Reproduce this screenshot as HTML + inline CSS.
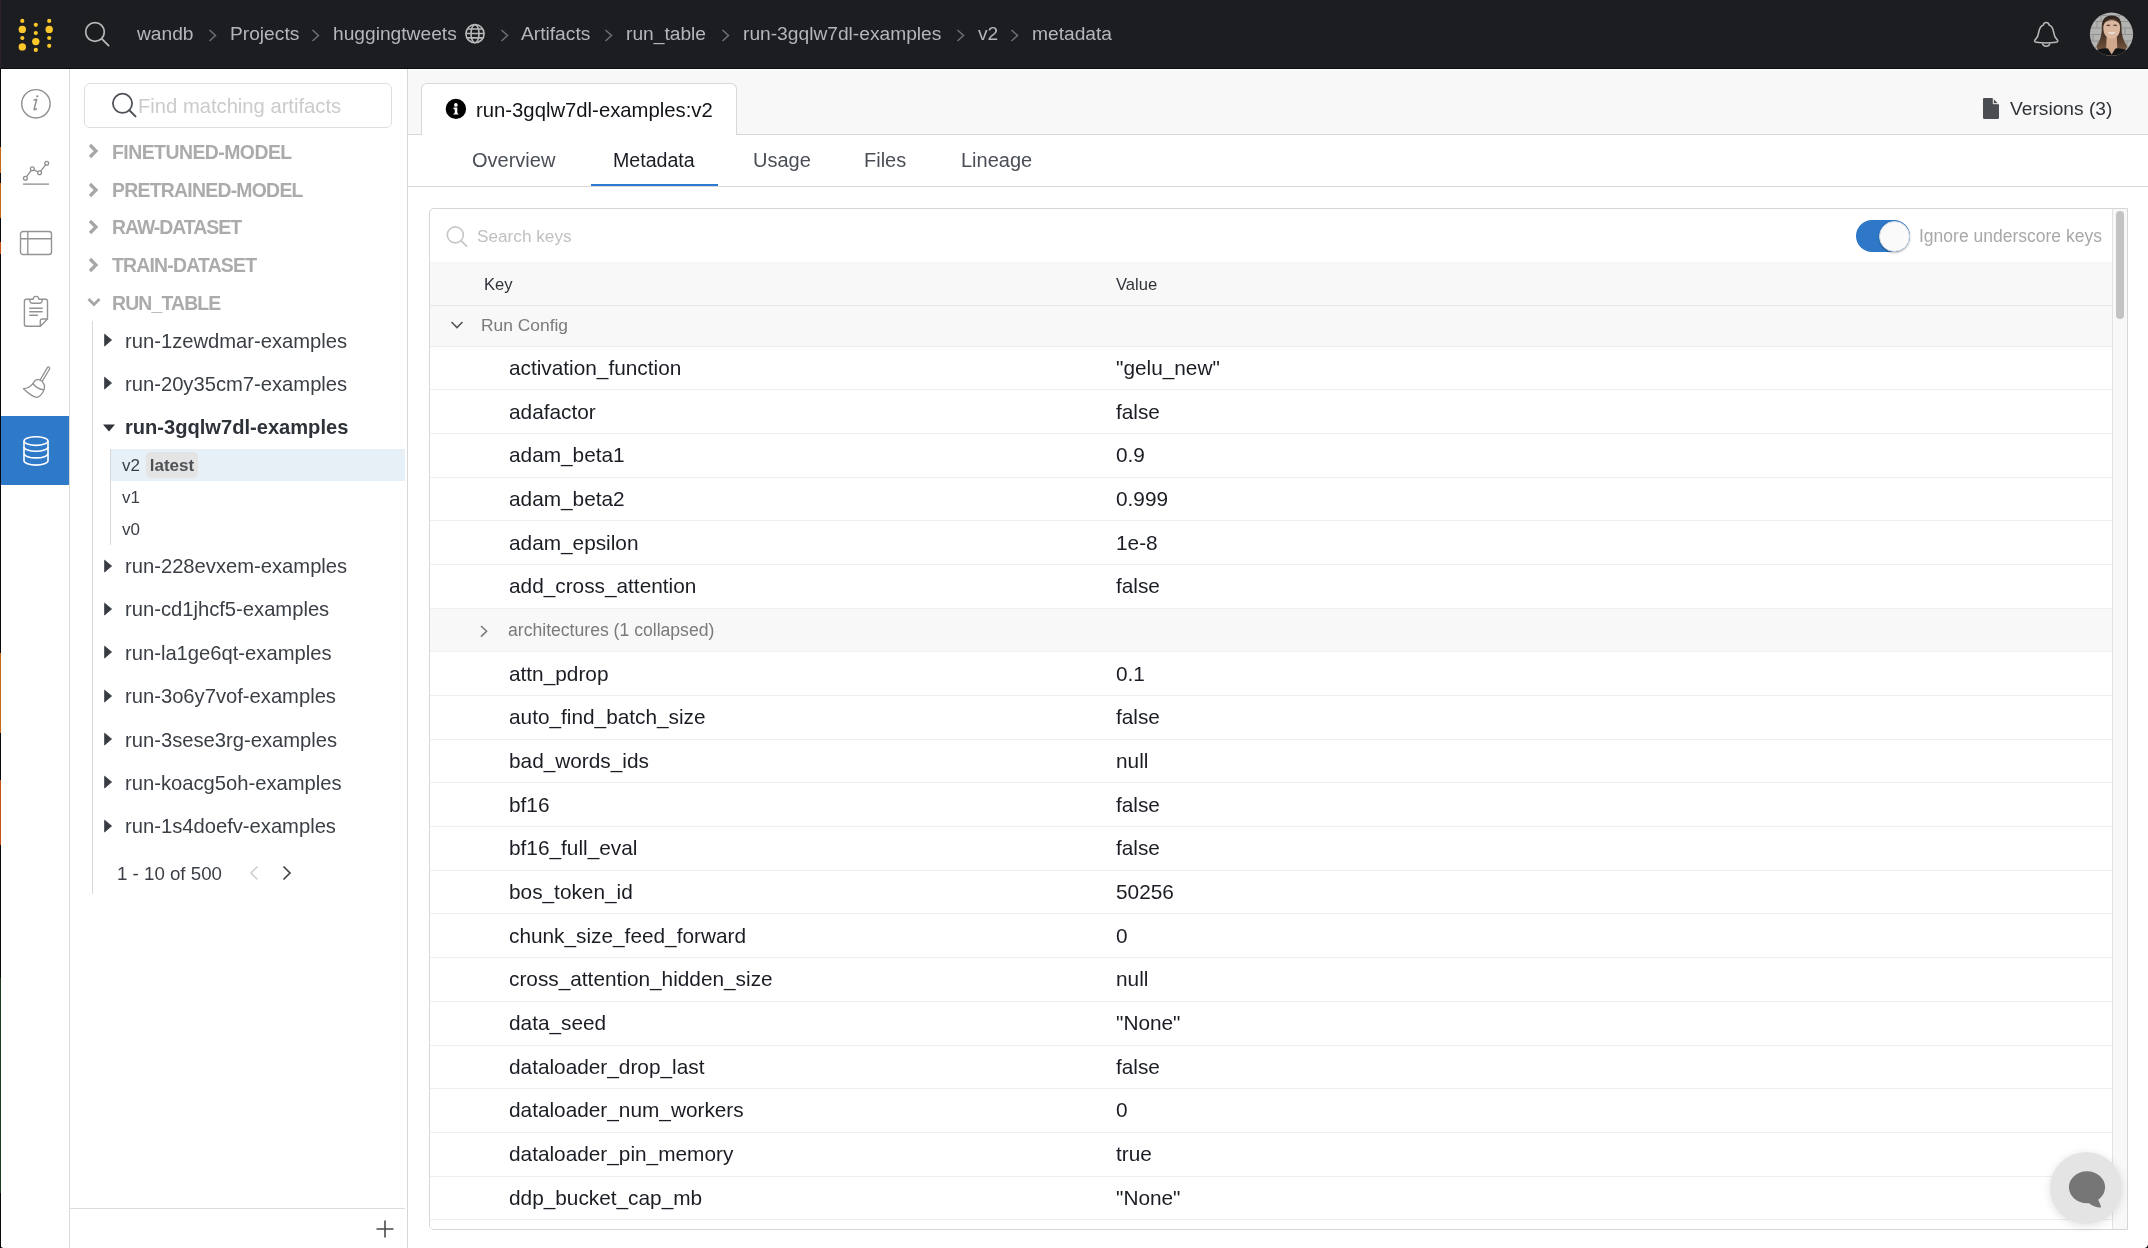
<!DOCTYPE html>
<html><head><meta charset="utf-8"><title>run-3gqlw7dl-examples metadata</title>
<style>
*{box-sizing:border-box}
html,body{margin:0;padding:0}
body{width:2148px;height:1248px;overflow:hidden;position:relative;background:#fff;font-family:"Liberation Sans",sans-serif;color:#1a1d24}
.abs{position:absolute}
.k,.v,.bc,.run,.cat,.ver,.badge,.tabs,.arch,span,.abs{will-change:transform}
#hdr{position:absolute;left:0;top:0;width:2148px;height:69px;background:#1c1d21;border-bottom:1px solid #0d0e11}
.bc{position:absolute;top:22px;font-size:19.2px;color:#b4b6ba;white-space:nowrap;line-height:24px}
.bchev{position:absolute;top:28.5px}
#rail{position:absolute;left:0;top:69px;width:70px;height:1179px;background:#fff;border-right:1px solid #d9d9d9}
#side{position:absolute;left:70px;top:69px;width:338px;height:1179px;background:#fff;border-right:1px solid #d6d6d6}
.cat{position:absolute;left:112px;margin-top:-1px;font-size:19.4px;font-weight:700;color:#ababab;letter-spacing:-0.45px;white-space:nowrap;line-height:22px}
.cchev{position:absolute;left:87px;margin-top:-1px}
.run{position:absolute;left:125px;font-size:20.2px;color:#3a3e45;white-space:nowrap;line-height:23px}
.run.b{font-weight:700;color:#2d3138;font-size:20.1px;left:125px}
.tri{position:absolute;left:103px}
.ver{position:absolute;left:122px;font-size:17px;color:#3a3e45;line-height:22px}
.badge{position:absolute;left:146px;top:452px;width:52px;height:26px;border-radius:5px;background:#e4e4e4;color:#4e5156;font-size:17px;font-weight:700;line-height:28px;text-align:center;letter-spacing:0px}
.vhl{position:absolute;left:111px;top:449px;width:294px;height:31.5px;background:#e8f0f7}
.vline{position:absolute;left:110px;top:449px;width:1px;height:96px;background:#d8d8d8}
#main{position:absolute;left:408px;top:68px;width:1740px;height:1180px;background:#fff}
#topgray{position:absolute;left:408px;top:70px;width:1740px;height:65px;background:#f8f8f8;border-bottom:1px solid #d8d8d8}
#tab{position:absolute;left:421px;top:83px;width:316px;height:52px;background:#fff;border:1px solid #d8d8d8;border-bottom:none;border-radius:6px 6px 0 0}
.tabs{position:absolute;top:148px;font-size:20px;color:#4a4f57;line-height:24px;white-space:nowrap}
#tabline{position:absolute;left:408px;top:186px;width:1740px;height:1px;background:#d8d8d8}
#uline{position:absolute;left:591px;top:184px;width:127px;height:2px;background:#2e7ad2}
#tbl{position:absolute;left:429px;top:208px;width:1699px;height:1022px;border:1px solid #d6d6d6;border-radius:5px 0 0 5px;overflow:hidden;background:#fff}
.thead{position:absolute;left:0;top:53px;width:1682px;height:44px;background:#f8f8f8;border-bottom:1px solid #e6e6e6}
.trow{position:absolute;left:0;width:1682px;height:43.67px;border-bottom:1px solid #efefef;background:#fff}
.trow.grp{background:#f8f8f8}
.k{position:absolute;left:79px;top:-0.8px;line-height:43px;font-size:20.8px;color:#1a1d24;white-space:nowrap}
.v{position:absolute;left:686px;top:-0.8px;line-height:43px;font-size:20.8px;color:#1a1d24;white-space:nowrap}
.arch{position:absolute;left:78px;top:0.5px;line-height:43px;font-size:17.6px;color:#7a7a7a;white-space:nowrap}
.rchev{position:absolute;left:48.5px;top:16.5px}
#sbar{position:absolute;left:1682px;top:0;width:16px;height:1022px;background:#f8f8f8;border-left:1px solid #e2e2e2}
#thumb{position:absolute;left:1686px;top:2px;width:8px;height:107.5px;border-radius:5px;background:#c3c3c3}
</style></head><body>
<div class="abs" style="left:0;top:0;width:1px;height:1248px;background:#0a0a0c;z-index:50"></div><div class="abs" style="left:0;top:0;width:1px;height:1248px;z-index:51;background:linear-gradient(#2a2228 0 68px,transparent 68px 147px,#c8681a 147px 173px,transparent 173px 183px,#c8681a 183px 218px,transparent 218px 242px,#c8501a 242px 254px,transparent 254px 653px,#c8681a 653px 733px,transparent 733px 780px,#c8501a 780px 845px,transparent 845px 978px,#1e3a1e 978px 1193px,transparent 1193px)"></div><div class="abs" style="left:0;top:1244px;width:4px;height:4px;z-index:52;background:radial-gradient(circle at 100% 0,transparent 3.5px,#000 4.5px)"></div><div class="abs" style="left:2144px;top:1244px;width:4px;height:4px;z-index:52;background:radial-gradient(circle at 0 0,transparent 3.5px,#000 4.5px)"></div>
<div id="hdr">
 <svg class="abs" style="left:14px;top:14px" width="44" height="42" viewBox="14 14 44 42">
  <g fill="#fcc72b">
   <circle cx="22.3" cy="20.9" r="2.1"/><circle cx="22.3" cy="29.4" r="3.7"/><circle cx="22.3" cy="38.0" r="2.1"/><circle cx="22.3" cy="46.9" r="3.7"/>
   <circle cx="35.8" cy="24.8" r="2.1"/><circle cx="35.8" cy="33.0" r="2.1"/><circle cx="35.8" cy="41.6" r="3.7"/><circle cx="35.8" cy="49.9" r="2.1"/>
   <circle cx="49.2" cy="20.9" r="2.1"/><circle cx="49.2" cy="29.4" r="3.7"/><circle cx="49.2" cy="38.0" r="2.1"/><circle cx="49.2" cy="45.8" r="2.1"/>
  </g>
 </svg>
 <svg class="abs" style="left:80px;top:18px" width="32" height="32" viewBox="80 18 32 32"><circle cx="95" cy="32" r="9.3" fill="none" stroke="#b8b8b8" stroke-width="1.7"/><path d="M101.8 38.8 L108.6 45.6" stroke="#b8b8b8" stroke-width="1.8" stroke-linecap="round"/></svg>
 <div class="bc" style="left:137px">wandb</div>
 <div class="bc" style="left:230px">Projects</div>
 <div class="bc" style="left:333px">huggingtweets</div>
 <svg class="abs" style="left:464px;top:23px" width="22" height="22" viewBox="0 0 22 22"><g fill="none" stroke="#b8b9bb" stroke-width="1.6"><circle cx="11" cy="10.7" r="9.1"/><ellipse cx="11" cy="10.7" rx="4" ry="9.1"/><path d="M3.2 6H18.8M1.9 10.5H20.1M3.2 14.9H18.8"/></g></svg>
 <div class="bc" style="left:521px">Artifacts</div>
 <div class="bc" style="left:626px">run_table</div>
 <div class="bc" style="left:743px">run-3gqlw7dl-examples</div>
 <div class="bc" style="left:978px">v2</div>
 <div class="bc" style="left:1032px">metadata</div>
 <svg class="bchev" style="left:208px" width="9" height="13" viewBox="0 0 9 13"><path d="M1.5 1 L7.5 6.5 L1.5 12" fill="none" stroke="#6d7075" stroke-width="1.5"/></svg><svg class="bchev" style="left:311px" width="9" height="13" viewBox="0 0 9 13"><path d="M1.5 1 L7.5 6.5 L1.5 12" fill="none" stroke="#6d7075" stroke-width="1.5"/></svg><svg class="bchev" style="left:500px" width="9" height="13" viewBox="0 0 9 13"><path d="M1.5 1 L7.5 6.5 L1.5 12" fill="none" stroke="#6d7075" stroke-width="1.5"/></svg><svg class="bchev" style="left:604px" width="9" height="13" viewBox="0 0 9 13"><path d="M1.5 1 L7.5 6.5 L1.5 12" fill="none" stroke="#6d7075" stroke-width="1.5"/></svg><svg class="bchev" style="left:721px" width="9" height="13" viewBox="0 0 9 13"><path d="M1.5 1 L7.5 6.5 L1.5 12" fill="none" stroke="#6d7075" stroke-width="1.5"/></svg><svg class="bchev" style="left:956px" width="9" height="13" viewBox="0 0 9 13"><path d="M1.5 1 L7.5 6.5 L1.5 12" fill="none" stroke="#6d7075" stroke-width="1.5"/></svg><svg class="bchev" style="left:1010px" width="9" height="13" viewBox="0 0 9 13"><path d="M1.5 1 L7.5 6.5 L1.5 12" fill="none" stroke="#6d7075" stroke-width="1.5"/></svg>
 <svg class="abs" style="left:2032px;top:20px" width="28" height="30" viewBox="0 0 28 30"><g fill="none" stroke="#b9b9b9" stroke-width="1.5" stroke-linejoin="round"><path d="M11.4 5 C11.6 3.3 12.8 2.4 14.2 2.4 C15.6 2.4 16.8 3.3 17.1 5 C19.5 5.8 21 8.5 21.6 12 C22.2 15.5 22.6 17 24.3 18.6 C25.5 19.7 26 20.5 25.8 21.3 C25.6 22 25 22.2 24 22.3 C20.5 22.8 17.5 23.1 14.2 23.1 C10.9 23.1 7.9 22.8 4.4 22.3 C3.4 22.2 2.8 22 2.6 21.3 C2.4 20.5 2.9 19.7 4.1 18.6 C5.8 17 6.2 15.5 6.8 12 C7.4 8.5 9 5.8 11.4 5 Z"/><path d="M10.6 23.5 Q10.9 26.3 14.2 26.3 Q17.5 26.3 17.8 23.5"/></g></svg>
 <svg class="abs" style="left:2089px;top:12px" width="45" height="45" viewBox="0 0 45 45"><defs><clipPath id="av"><circle cx="22.5" cy="22.2" r="21.6"/></clipPath><linearGradient id="hair" x1="0" y1="0" x2="0" y2="1"><stop offset="0" stop-color="#2e221b"/><stop offset="0.55" stop-color="#4a3527"/><stop offset="1" stop-color="#7a5a40"/></linearGradient></defs><g clip-path="url(#av)"><rect width="45" height="45" fill="#b3b4b2"/><path d="M0 3.5H45M0 9.5H45M0 16H45M0 22.5H45M0 29H45M0 35.5H45M12 3.5V9.5M30 3.5V9.5M8 9.5V16M36 16V22.5M4 22.5V29M38 29V35.5M9 29V35.5" stroke="#8e8f8d" stroke-width="0.9"/><path d="M22.7 3.6 C16 3.6 12.6 8 12.8 15 C13 22 11.5 28 7.5 34 C8 37 9 39 11 40 L34 40 C36 39 37.5 37 38 34 C34 28 32.3 22 32.5 15 C32.7 8 29.4 3.6 22.7 3.6 Z" fill="url(#hair)"/><path d="M17.6 25 H27.8 L28.6 45 H16.8 Z" fill="#cfa88e"/><path d="M22.7 7.2 C17.8 7.2 14.3 10.2 14.3 16 C14.3 22.5 17.8 26.8 22.7 26.8 C27.6 26.8 31.1 22.5 31.1 16 C31.1 10.2 27.6 7.2 22.7 7.2 Z" fill="#dbb7a0"/><path d="M22.7 7.2 C18.5 7.2 15.6 8.6 14.6 12 Q18 8.4 22.7 8.3 Q27.4 8.4 30.8 12 C29.8 8.6 26.9 7.2 22.7 7.2 Z" fill="#3a2a20" opacity="0.8"/><path d="M17.6 13.6 Q19.4 12.6 21 13.6 M24.4 13.6 Q26 12.6 27.8 13.6" stroke="#5c4436" stroke-width="1.4" fill="none"/><path d="M18.6 19.8 Q22.7 24.2 26.8 19.8 Q22.7 21 18.6 19.8 Z" fill="#f2ece6"/><path d="M3 45 L8 38 Q14 35.5 19 36.5 L22.7 42.5 L26.4 36.5 Q31 35.5 37 38 L42 45 Z" fill="#141517"/></g></svg>
</div>
<div id="rail">
 <svg class="abs" style="left:19px;top:18px" width="34" height="34" viewBox="0 0 34 34"><circle cx="16.9" cy="16.8" r="14.2" fill="none" stroke="#8e8e8e" stroke-width="1.4"/><path d="M17.6 12.5 L15.2 21.8 Q14.9 23.3 16.2 22.6 L17.3 21.8" fill="none" stroke="#8e8e8e" stroke-width="1.5" stroke-linecap="round"/><path d="M15.1 13 L17.6 12.5" stroke="#8e8e8e" stroke-width="1.3" stroke-linecap="round"/><circle cx="18.3" cy="9.3" r="1.1" fill="#8e8e8e"/></svg>
 <svg class="abs" style="left:20px;top:87px" width="32" height="32" viewBox="0 0 32 32"><g fill="none" stroke="#8e8e8e" stroke-width="1.3"><circle cx="5.4" cy="22.3" r="1.9"/><circle cx="12.3" cy="12.7" r="1.9"/><circle cx="19.6" cy="16.8" r="1.9"/><circle cx="26.7" cy="7.2" r="1.9"/><path d="M6.5 20.7 L11.2 14.3 M14 13.7 L17.9 15.9 M20.7 15.2 L25.6 8.8"/><path d="M3 28.1 H29"/></g></svg>
 <svg class="abs" style="left:19px;top:161px" width="34" height="26" viewBox="0 0 34 26"><g fill="none" stroke="#959595" stroke-width="1.4"><rect x="1.5" y="1.5" width="31" height="23" rx="2.5"/><path d="M1.5 8.7 H32.5 M8.8 1.5 V24.5"/></g></svg>
 <svg class="abs" style="left:22px;top:225px" width="28" height="34" viewBox="0 0 28 34"><g fill="none" stroke="#939393" stroke-width="1.4" stroke-linejoin="round"><path d="M7.7 5.3 H4.5 Q2.4 5.3 2.4 7.4 V30.2 Q2.4 32.3 4.5 32.3 H18.3 L25.5 25 V7.4 Q25.5 5.3 23.4 5.3 H20.2"/><path d="M7.7 5.3 Q7.7 9.2 10 9.2 H18 Q20.2 9.2 20.2 5.3 H17 Q16.5 2.4 14 2.4 Q11.5 2.4 11 5.3 Z"/><path d="M7.2 14.3 H20.7 M7.2 17.8 H20.7 M7.2 21.2 H15.9" stroke-width="1.5"/><path d="M18.3 32.3 V27 Q18.3 25 20.3 25 H25.5"/></g></svg>
 <svg class="abs" style="left:21px;top:296px" width="32" height="34" viewBox="0 0 32 34"><g fill="none" stroke-linecap="round" stroke-linejoin="round"><path d="M27.5 3.3 L20.3 15.5" stroke="#8e8e8e" stroke-width="3.8"/><path d="M27.5 3.3 L20.3 15.5" stroke="#fff" stroke-width="1.3"/><path d="M12.1 18.4 Q14 14.3 17.5 14.6 Q21.5 15 23.6 20.8 Q23.5 24 22.2 26.5 Q19 32.3 15.9 32.3 Q11 31.8 2.5 23.7 Q8 23.5 12.1 18.4 Z" fill="#fff" stroke="#8e8e8e" stroke-width="1.3"/><path d="M11.8 18.8 Q17 24.5 22.9 24.8" stroke="#8e8e8e" stroke-width="1.3"/></g></svg>
 <div class="abs" style="left:1px;top:347px;width:68px;height:69px;background:#2f79c9"></div>
 <svg class="abs" style="left:22px;top:367px" width="28" height="32" viewBox="0 0 28 32"><g fill="none" stroke="#fff" stroke-width="1.6"><ellipse cx="14" cy="5.05" rx="12" ry="4.3"/><path d="M2 5.05 V24.8 A12 4.3 0 0 0 26 24.8 V5.05"/><path d="M2 10.9 A12 4.3 0 0 0 26 10.9 M2 17.6 A12 4.3 0 0 0 26 17.6"/></g></svg>
</div>
<div id="side">
 <div class="abs" style="left:14px;top:14px;width:308px;height:45px;border:1.3px solid #dedede;border-radius:6px"></div>
 <svg class="abs" style="left:40px;top:22px" width="30" height="30" viewBox="0 0 30 30"><circle cx="12.5" cy="12.3" r="9.6" fill="none" stroke="#4e5258" stroke-width="1.8"/><path d="M19.3 19.2 L25.5 25.4" stroke="#4e5258" stroke-width="2" stroke-linecap="round"/></svg>
 <div class="abs" style="left:68px;top:25px;font-size:20.2px;color:#cbcbcb;line-height:24px;white-space:nowrap">Find matching artifacts</div>
 <div class="abs" style="left:22px;top:252px;width:1px;height:573px;background:#d8d8d8"></div>
 <div class="abs" style="left:0;top:1139px;width:335px;height:1px;background:#dcdcdc"></div>
 <svg class="abs" style="left:304px;top:1149px" width="22" height="22" viewBox="0 0 22 22"><path d="M11 2.5 V19.5 M2.5 11 H19.5" stroke="#4a4a4a" stroke-width="1.6"/></svg>
</div>
<div class="abs" id="sideinner" style="left:0;top:0">
<svg class="cchev" style="top:144.4px" width="12" height="16" viewBox="0 0 12 16"><path d="M3 2 L9 8 L3 14" fill="none" stroke="#a6a6a6" stroke-width="3.2" stroke-linejoin="miter"/></svg>
<div class="cat" style="top:141.9px;letter-spacing:-0.52px">FINETUNED-MODEL</div>
<svg class="cchev" style="top:182.5px" width="12" height="16" viewBox="0 0 12 16"><path d="M3 2 L9 8 L3 14" fill="none" stroke="#a6a6a6" stroke-width="3.2" stroke-linejoin="miter"/></svg>
<div class="cat" style="top:180.0px;letter-spacing:-0.74px">PRETRAINED-MODEL</div>
<svg class="cchev" style="top:219.8px" width="12" height="16" viewBox="0 0 12 16"><path d="M3 2 L9 8 L3 14" fill="none" stroke="#a6a6a6" stroke-width="3.2" stroke-linejoin="miter"/></svg>
<div class="cat" style="top:217.3px;letter-spacing:-1.0px">RAW-DATASET</div>
<svg class="cchev" style="top:257.5px" width="12" height="16" viewBox="0 0 12 16"><path d="M3 2 L9 8 L3 14" fill="none" stroke="#a6a6a6" stroke-width="3.2" stroke-linejoin="miter"/></svg>
<div class="cat" style="top:255.0px;letter-spacing:-0.78px">TRAIN-DATASET</div>
<svg class="cchev" style="top:297.1px;left:86px" width="16" height="12" viewBox="0 0 16 12"><path d="M2.5 3 L8 8.5 L13.5 3" fill="none" stroke="#a6a6a6" stroke-width="2.8"/></svg>
<div class="cat" style="top:293.1px;letter-spacing:-0.84px">RUN_TABLE</div>
<svg class="tri" style="top:333.0px" width="10" height="14" viewBox="0 0 10 14"><path d="M1.6 1.2 L8.6 7 L1.6 13 Z" fill="#383c42" stroke="#383c42" stroke-width="0.8" stroke-linejoin="round"/></svg>
<div class="run" style="top:329.5px">run-1zewdmar-examples</div>
<svg class="tri" style="top:376.0px" width="10" height="14" viewBox="0 0 10 14"><path d="M1.6 1.2 L8.6 7 L1.6 13 Z" fill="#383c42" stroke="#383c42" stroke-width="0.8" stroke-linejoin="round"/></svg>
<div class="run" style="top:372.5px">run-20y35cm7-examples</div>
<svg class="tri" style="top:423px;left:102px" width="14" height="10" viewBox="0 0 14 10"><path d="M1 1.5 L13 1.5 L7 8.5 Z" fill="#30343a"/></svg>
<div class="run b" style="top:415.8px">run-3gqlw7dl-examples</div>
<div class="vhl"></div>
<div class="vline"></div>
<div class="ver" style="top:454.6px">v2</div><div class="badge">latest</div>
<div class="ver" style="top:487.2px">v1</div>
<div class="ver" style="top:518.8px">v0</div>
<svg class="tri" style="top:558.5px" width="10" height="14" viewBox="0 0 10 14"><path d="M1.6 1.2 L8.6 7 L1.6 13 Z" fill="#383c42" stroke="#383c42" stroke-width="0.8" stroke-linejoin="round"/></svg>
<div class="run" style="top:555.0px">run-228evxem-examples</div>
<svg class="tri" style="top:601.6px" width="10" height="14" viewBox="0 0 10 14"><path d="M1.6 1.2 L8.6 7 L1.6 13 Z" fill="#383c42" stroke="#383c42" stroke-width="0.8" stroke-linejoin="round"/></svg>
<div class="run" style="top:598.1px">run-cd1jhcf5-examples</div>
<svg class="tri" style="top:645.3px" width="10" height="14" viewBox="0 0 10 14"><path d="M1.6 1.2 L8.6 7 L1.6 13 Z" fill="#383c42" stroke="#383c42" stroke-width="0.8" stroke-linejoin="round"/></svg>
<div class="run" style="top:641.8px">run-la1ge6qt-examples</div>
<svg class="tri" style="top:688.6px" width="10" height="14" viewBox="0 0 10 14"><path d="M1.6 1.2 L8.6 7 L1.6 13 Z" fill="#383c42" stroke="#383c42" stroke-width="0.8" stroke-linejoin="round"/></svg>
<div class="run" style="top:685.1px">run-3o6y7vof-examples</div>
<svg class="tri" style="top:732.0px" width="10" height="14" viewBox="0 0 10 14"><path d="M1.6 1.2 L8.6 7 L1.6 13 Z" fill="#383c42" stroke="#383c42" stroke-width="0.8" stroke-linejoin="round"/></svg>
<div class="run" style="top:728.5px">run-3sese3rg-examples</div>
<svg class="tri" style="top:775.3px" width="10" height="14" viewBox="0 0 10 14"><path d="M1.6 1.2 L8.6 7 L1.6 13 Z" fill="#383c42" stroke="#383c42" stroke-width="0.8" stroke-linejoin="round"/></svg>
<div class="run" style="top:771.8px">run-koacg5oh-examples</div>
<svg class="tri" style="top:818.8px" width="10" height="14" viewBox="0 0 10 14"><path d="M1.6 1.2 L8.6 7 L1.6 13 Z" fill="#383c42" stroke="#383c42" stroke-width="0.8" stroke-linejoin="round"/></svg>
<div class="run" style="top:815.3px">run-1s4doefv-examples</div>
 <div class="abs" style="left:117px;top:863.4px;font-size:18.7px;color:#3a3e45;line-height:22px;white-space:nowrap">1 - 10 of 500</div>
 <svg class="abs" style="left:248px;top:865px" width="12" height="16" viewBox="0 0 12 16"><path d="M9.5 1.5 L3 8 L9.5 14.5" fill="none" stroke="#cfcfcf" stroke-width="1.6"/></svg>
 <svg class="abs" style="left:281px;top:865px" width="12" height="16" viewBox="0 0 12 16"><path d="M2.5 1.5 L9 8 L2.5 14.5" fill="none" stroke="#3a3e45" stroke-width="1.6"/></svg>
</div>
<div id="topgray"></div>
<div id="tab"></div>
<svg class="abs" style="left:445px;top:98px" width="22" height="22" viewBox="0 0 22 22"><circle cx="10.9" cy="10.9" r="10.2" fill="#000"/><circle cx="10.9" cy="6.9" r="1.85" fill="#fff"/><path d="M8.4 9.6 H12.3 V14.4 L13.6 16.4 H8.2 L9.8 14.4 V11.4 L8.6 10.9 Z" fill="#fff"/></svg>
<div class="abs" style="left:476px;top:98px;font-size:20.3px;color:#111418;line-height:24px;white-space:nowrap">run-3gqlw7dl-examples:v2</div>
<svg class="abs" style="left:1982px;top:97px" width="18" height="23" viewBox="0 0 18 23"><path d="M2 1 H10.5 L17 7.5 V20.5 Q17 22 15.5 22 H2.5 Q1 22 1 20.5 V2 Q1 1 2 1 Z" fill="#4a4e52"/><path d="M11.3 1 V6.7 H17" fill="none" stroke="#f8f8f8" stroke-width="1"/></svg>
<div class="abs" style="left:2010px;top:97.3px;font-size:19.2px;color:#2f3338;line-height:24px;white-space:nowrap">Versions (3)</div>
<div class="tabs" style="left:472px">Overview</div>
<div class="tabs" style="left:613px;color:#1a1d24;font-size:19.6px">Metadata</div>
<div class="tabs" style="left:753px">Usage</div>
<div class="tabs" style="left:864px">Files</div>
<div class="tabs" style="left:961px">Lineage</div>
<div id="tabline"></div>
<div id="uline"></div>
<div id="tbl">
 <svg class="abs" style="left:15px;top:16px" width="24" height="24" viewBox="0 0 24 24"><circle cx="10.3" cy="9.9" r="8" fill="none" stroke="#c6c6c6" stroke-width="1.6"/><path d="M16 15.6 L21.5 21.2" stroke="#c6c6c6" stroke-width="1.8" stroke-linecap="round"/></svg>
 <div class="abs" style="left:47px;top:16.2px;font-size:17.2px;color:#c0c0c0;line-height:22px;white-space:nowrap">Search keys</div>
 <div class="abs" style="left:1426px;top:11px;width:54px;height:32px;border-radius:16px;background:#2e78c7"></div>
 <div class="abs" style="left:1449px;top:11.5px;width:31px;height:31px;border-radius:50%;background:#fafafa;box-shadow:0 1px 2px rgba(0,0,0,.25);border:1px solid #cfd8e3"></div>
 <div class="abs" style="left:1489px;top:16px;font-size:17.5px;color:#a8a8a8;line-height:22px;white-space:nowrap">Ignore underscore keys</div>
 <div class="thead"><span class="abs" style="left:54px;top:12px;font-size:16.6px;color:#30343a;line-height:22px">Key</span><span class="abs" style="left:686px;top:12px;font-size:16.6px;color:#30343a;line-height:22px">Value</span></div>
 <div class="trow grp" style="top:97px;height:41px;border-bottom:1px solid #ededed"><svg class="abs" style="left:20px;top:14px" width="14" height="10" viewBox="0 0 14 10"><path d="M1.5 2 L7 7.5 L12.5 2" fill="none" stroke="#555" stroke-width="1.6"/></svg><span class="abs" style="left:51px;top:8px;font-size:17.4px;color:#7a7a7a;line-height:22px">Run Config</span></div>
<div class="trow" style="top:137.80px"><span class="k">activation_function</span><span class="v">"gelu_new"</span></div>
<div class="trow" style="top:181.47px"><span class="k">adafactor</span><span class="v">false</span></div>
<div class="trow" style="top:225.14px"><span class="k">adam_beta1</span><span class="v">0.9</span></div>
<div class="trow" style="top:268.81px"><span class="k">adam_beta2</span><span class="v">0.999</span></div>
<div class="trow" style="top:312.48px"><span class="k">adam_epsilon</span><span class="v">1e-8</span></div>
<div class="trow" style="top:356.15px"><span class="k">add_cross_attention</span><span class="v">false</span></div>
<div class="trow grp" style="top:399.82px"><svg class="rchev" width="10" height="13" viewBox="0 0 10 13"><path d="M2 1 L7.6 6.3 L2 11.6" fill="none" stroke="#777" stroke-width="1.5"/></svg><span class="arch">architectures (1 collapsed)</span></div>
<div class="trow" style="top:443.49px"><span class="k">attn_pdrop</span><span class="v">0.1</span></div>
<div class="trow" style="top:487.16px"><span class="k">auto_find_batch_size</span><span class="v">false</span></div>
<div class="trow" style="top:530.83px"><span class="k">bad_words_ids</span><span class="v">null</span></div>
<div class="trow" style="top:574.50px"><span class="k">bf16</span><span class="v">false</span></div>
<div class="trow" style="top:618.17px"><span class="k">bf16_full_eval</span><span class="v">false</span></div>
<div class="trow" style="top:661.84px"><span class="k">bos_token_id</span><span class="v">50256</span></div>
<div class="trow" style="top:705.51px"><span class="k">chunk_size_feed_forward</span><span class="v">0</span></div>
<div class="trow" style="top:749.18px"><span class="k">cross_attention_hidden_size</span><span class="v">null</span></div>
<div class="trow" style="top:792.85px"><span class="k">data_seed</span><span class="v">"None"</span></div>
<div class="trow" style="top:836.52px"><span class="k">dataloader_drop_last</span><span class="v">false</span></div>
<div class="trow" style="top:880.19px"><span class="k">dataloader_num_workers</span><span class="v">0</span></div>
<div class="trow" style="top:923.86px"><span class="k">dataloader_pin_memory</span><span class="v">true</span></div>
<div class="trow" style="top:967.53px"><span class="k">ddp_bucket_cap_mb</span><span class="v">"None"</span></div>
<div class="trow" style="top:1011.20px"><span class="k">ddp_find_unused</span><span class="v">null</span></div>
 <div id="sbar"></div>
 <div id="thumb"></div>
</div>
<div class="abs" style="left:2050px;top:1152px;width:72px;height:72px;border-radius:50%;background:#e4e4e4;box-shadow:0 2px 10px rgba(0,0,0,.12)"></div>
<svg class="abs" style="left:2067px;top:1170px" width="40" height="40" viewBox="0 0 40 40"><ellipse cx="20" cy="17.2" rx="18.1" ry="16" fill="#767676"/><path d="M21 32.5 Q27.5 37.8 33.9 37.5 Q34.4 37 31.2 29.8 Z" fill="#767676"/></svg>
</body></html>
